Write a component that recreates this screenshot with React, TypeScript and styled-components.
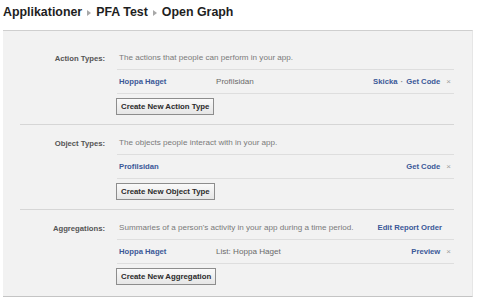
import React from "react";
import styled, { createGlobalStyle } from "styled-components";

const Global = createGlobalStyle`
  html, body { margin: 0; padding: 0; background: #fff; }
  body { font-family: "Liberation Sans", Arial, sans-serif; }
`;

const Page = styled.div`
  width: 480px;
  height: 303px;
  padding: 4px 0 0 3px;
  box-sizing: border-box;
  overflow: hidden;
`;

const Title = styled.h1`
  margin: 0 0 10px 0;
  font-size: 12.4px;
  line-height: 16px;
  font-weight: bold;
  color: #1e1e1e;
  display: flex;
  align-items: center;
  gap: 5px;
`;

const Crumb = styled.span``;

const Arrow = styled.span`
  width: 0;
  height: 0;
  border-top: 3px solid transparent;
  border-bottom: 3px solid transparent;
  border-left: 4px solid #a8a8a8;
  margin-top: 1px;
`;

const Panel = styled.div`
  width: 470px;
  box-sizing: border-box;
  background: #f2f2f2;
  border-top: 1px solid #cfcfcf;
  border-bottom: 1px solid #c4c4c4;
  border-right: 1px solid #e6e6e6;
  padding: 9px 0 2px;
`;

const Section = styled.div<{ $last?: boolean }>`
  display: grid;
  grid-template-columns: 85px 1fr;
  column-gap: 12px;
  margin: 0 18px 0 17px;
  padding: 6px 0 9px;
  border-bottom: ${(p) => (p.$last ? "none" : "1px solid #d6d6d6")};
`;

const Label = styled.div`
  height: 24px;
  display: flex;
  align-items: center;
  justify-content: flex-end;
  font-size: 7.7px;
  font-weight: bold;
  color: #555;
`;

const Content = styled.div`
  display: flex;
  flex-direction: column;
`;

const Row = styled.div`
  height: 24px;
  box-sizing: border-box;
  display: flex;
  align-items: center;
  padding: 0 3px 0 2px;
  border-bottom: 1px solid #dedede;
  font-size: 8.1px;
`;

const Desc = styled.span`
  color: #7a7a7a;
  flex: 1;
`;

const Link = styled.span`
  color: #3b5998;
  font-weight: bold;
  font-size: 7.7px;
`;

const Name = styled(Link)`
  width: 97px;
  flex: none;
`;

const Type = styled.span`
  color: #6a6a6a;
  flex: 1;
`;

const Actions = styled.span`
  display: flex;
  align-items: center;
  gap: 3px;
`;

const Sep = styled.span`
  color: #8a8a8a;
  font-size: 8px;
  font-weight: bold;
`;

const Close = styled.span`
  color: #a0a0a0;
  font-size: 8px;
  margin-left: 6px;
`;

const ReportLink = styled(Link)`
  margin-right: 9px;
`;

const Button = styled.button`
  align-self: flex-start;
  margin: 4px 0 0 -1px;
  height: 17px;
  padding: 0 4px;
  box-sizing: border-box;
  border: 1px solid #8d8d8d;
  background: linear-gradient(#fafafa, #e6e6e6);
  font-family: "Liberation Sans", Arial, sans-serif;
  font-size: 7.8px;
  font-weight: bold;
  color: #2b2b2b;
`;

type Item = { name: string; type?: string; actions: string[] };

const sections: {
  label: string;
  desc: string;
  extra?: string;
  item: Item;
  button: string;
}[] = [
  {
    label: "Action Types:",
    desc: "The actions that people can perform in your app.",
    item: { name: "Hoppa Haget", type: "Profilsidan", actions: ["Skicka", "Get Code"] },
    button: "Create New Action Type",
  },
  {
    label: "Object Types:",
    desc: "The objects people interact with in your app.",
    item: { name: "Profilsidan", actions: ["Get Code"] },
    button: "Create New Object Type",
  },
  {
    label: "Aggregations:",
    desc: "Summaries of a person's activity in your app during a time period.",
    extra: "Edit Report Order",
    item: { name: "Hoppa Haget", type: "List: Hoppa Haget", actions: ["Preview"] },
    button: "Create New Aggregation",
  },
];

export default function App() {
  return (
    <Page>
      <Global />
      <Title>
        <Crumb>Applikationer</Crumb>
        <Arrow />
        <Crumb>PFA Test</Crumb>
        <Arrow />
        <Crumb>Open Graph</Crumb>
      </Title>
      <Panel>
        {sections.map((s, i) => (
          <Section key={s.label} $last={i === sections.length - 1}>
            <Label>{s.label}</Label>
            <Content>
              <Row>
                <Desc>{s.desc}</Desc>
                {s.extra && <ReportLink>{s.extra}</ReportLink>}
              </Row>
              <Row>
                <Name>{s.item.name}</Name>
                <Type>{s.item.type ?? ""}</Type>
                <Actions>
                  {s.item.actions.map((a, j) => (
                    <React.Fragment key={a}>
                      {j > 0 && <Sep>·</Sep>}
                      <Link>{a}</Link>
                    </React.Fragment>
                  ))}
                </Actions>
                <Close>×</Close>
              </Row>
              <Button>{s.button}</Button>
            </Content>
          </Section>
        ))}
      </Panel>
    </Page>
  );
}
